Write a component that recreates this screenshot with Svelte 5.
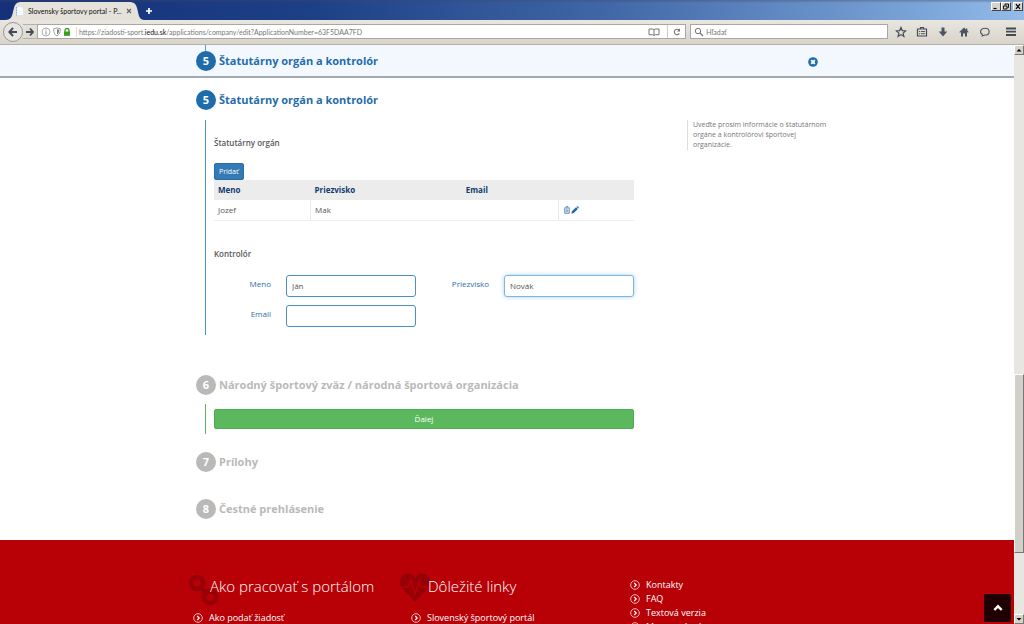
<script>
  let meno = $state('Ján');
  let priezvisko = $state('Novák');
  let email = $state('');
  const people = [{ meno: 'Jozef', priezvisko: 'Mak', email: '' }];
  const contactLinks = ['Kontakty', 'FAQ', 'Textová verzia', 'Mapa stránok'];
</script>

{#snippet bullet()}
  <svg class="bullet" viewBox="0 0 10 10" aria-hidden="true">
    <circle cx="5" cy="5" r="4.3" fill="none" stroke="#ffc9c9" stroke-width=".9" />
    <path d="M4.2 3 6.2 5 4.2 7" fill="none" stroke="#fff" stroke-width="1.2" />
  </svg>
{/snippet}

{#snippet heading(n, text)}
  <h2><span class="num">{n}</span>{text}</h2>
{/snippet}

<div class="window">
  <header class="titlebar">
    <div class="tab">
      <svg class="tab-shape" viewBox="0 0 140 18" preserveAspectRatio="none" aria-hidden="true">
        <path d="M0 18C8 18 7 12 9 6 10 2 12 0 16 0H124C129 0 131 2 132 6 134 12 133 18 140 18Z" fill="#e5e2dc" />
      </svg>
      <svg class="page-icon" viewBox="0 0 8 10" aria-hidden="true">
        <path d="M.5.5H5L7.5 3V9.5H.5Z" fill="#f6faff" stroke="#d5e0ea" stroke-width=".6" /><path d="M.5 1V9.5" stroke="#79a9d8" stroke-dasharray="1.5 1" />
      </svg>
      <span class="tab-title">Slovensky športovy portal - P...</span>
      <button class="plain" aria-label="Zavrieť kartu"><svg width="6" height="6" viewBox="0 0 6 6"><path d="M1 1 5 5M5 1 1 5" stroke="#666" stroke-width="1.3" /></svg></button>
    </div>
    <button class="plain new-tab" aria-label="Nová karta"><svg width="8" height="8" viewBox="0 0 8 8"><path d="M4 1V7M1 4H7" stroke="#fff" stroke-width="1.7" /></svg></button>
    <div class="win-buttons">
      <button aria-label="Minimalizovať"><svg viewBox="0 0 8 7"><path d="M1.5 5.5H4.5" stroke="#000" stroke-width="1.2" /></svg></button>
      <button aria-label="Obnoviť"><svg viewBox="0 0 8 7"><path d="M3 2.5V1H6.5V4.5H5.5M1.5 3H5V6H1.5Z" fill="none" stroke="#000" stroke-width=".9" /></svg></button>
      <button class="close" aria-label="Zavrieť"><svg viewBox="0 0 8 7"><path d="M2 1.2 6 5.8M6 1.2 2 5.8" stroke="#000" stroke-width="1.2" /></svg></button>
    </div>
  </header>

  <nav class="toolbar">
    <button class="plain back" aria-label="Späť"><svg width="10" height="10" viewBox="0 0 10 10"><path d="M5 1 1.3 5 5 9M1.5 5H9" fill="none" stroke="#414c59" stroke-width="2" /></svg></button>
    <button class="plain forward" aria-label="Dopredu"><svg width="8" height="10" viewBox="0 0 8 10"><path d="M4 1.5 7 5 4 8.5M7 5H0" fill="none" stroke="#414c59" stroke-width="1.9" /></svg></button>
    <div class="address">
      <svg width="10" height="10" viewBox="0 0 10 10" aria-hidden="true"><circle cx="5" cy="5" r="4" fill="none" stroke="#999" stroke-width=".8" /><path d="M5 2.4V3.5M5 4.3V7.6" stroke="#888" /></svg>
      <svg width="8" height="10" viewBox="0 0 8 10" aria-hidden="true"><path d="M4 1 7.3 1.7C7.4 5.5 6.5 7.7 4 9 1.5 7.7.6 5.5.7 1.7Z" fill="#fff" stroke="#888" stroke-width=".8" /><path d="M4 2.3V7.6C5.5 6.5 6 5 6.1 2.7Z" fill="#777" /></svg>
      <svg width="8" height="10" viewBox="0 0 8 10" aria-hidden="true"><path d="M2 5V3.5C2 .8 6 .8 6 3.5V5" fill="none" stroke="#3d9b22" stroke-width="1.3" /><rect x="1" y="4.5" width="6" height="4.3" fill="#3d9b22" /></svg>
      <span class="url">https://ziadosti-sport.<b>iedu.sk</b>/applications/company/edit?ApplicationNumber=63F5DAA7FD</span>
      <button class="plain reader" aria-label="Režim čítania"><svg width="12" height="10" viewBox="0 0 12 10"><path d="M1 2H4.7L6 2.7 7.3 2H11V7.7H7.3L6 8.5 4.7 7.7H1ZM6 3V8" fill="none" stroke="#777" /></svg></button>
      <button class="plain reload" aria-label="Obnoviť stránku"><svg width="10" height="10" viewBox="0 0 10 10"><path d="M7.3 6.4A2.7 2.7 0 1 1 7 3.2" fill="none" stroke="#777" stroke-width="1.1" /><path d="M8 1.3V4.5H4.9Z" fill="#777" /></svg></button>
    </div>
    <label class="search">
      <svg width="10" height="10" viewBox="0 0 10 10" aria-hidden="true"><circle cx="4" cy="4" r="2.7" fill="none" stroke="#777" /><path d="M6 6 9 9" stroke="#777" stroke-width="1.3" /></svg>
      <input type="search" placeholder="Hľadať" aria-label="Hľadať" />
    </label>
    <div class="tools">
      <button class="plain" aria-label="Záložka"><svg viewBox="0 0 12 12"><path d="M6 1.5 7.3 4.6 10.7 4.9 8.1 7.1 8.9 10.4 6 8.6 3.1 10.4 3.9 7.1 1.3 4.9 4.7 4.6Z" fill="none" stroke="#414c59" stroke-width="1.2" /></svg></button>
      <button class="plain" aria-label="Zoznam záložiek"><svg viewBox="0 0 12 12"><path d="M1.5 3H10.500V10H1.500ZM4.500 3V1.500H7.500V3" fill="none" stroke="#414c59" stroke-width="1.200" /><path d="M3 5.500H4.200M5 5.500H9M3 7.700H4.200M5 7.700H9" stroke="#414c59" stroke-width=".9" /></svg></button>
      <button class="plain" aria-label="Stiahnuté"><svg viewBox="0 0 12 12"><path d="M4.5 1.5H7.5V5.5H10.3L6 10.5 1.7 5.5H4.5Z" fill="#4c5663" /></svg></button>
      <button class="plain" aria-label="Domov"><svg viewBox="0 0 12 12"><path d="M6 1.5 1.3 6 2 6.7 3 6V10.5H5V7.5H7V10.5H9V6L10 6.7 10.7 6 9.3 4.6V2.5H8V3.4Z" fill="#4c5663" /></svg></button>
      <button class="plain" aria-label="Chat"><svg viewBox="0 0 12 12"><path d="M3.500 8.600C0 6.500 1.500 2.300 6 2.300 11.500 2.300 11.500 9 6 9L3.200 10Z" fill="none" stroke="#4c5663" stroke-width="1.100" /></svg></button>
      <button class="plain menu" aria-label="Ponuka"><svg viewBox="0 0 12 12"><path d="M1 2.5H11M1 5.7H11M1 9H11" stroke="#414c59" stroke-width="1.8" /></svg></button>
    </div>
  </nav>

  <div class="viewport">
    <div class="page">
      <div class="sticky">
        <div class="container sticky-row">
          {@render heading(5, 'Štatutárny orgán a kontrolór')}
          <button class="plain dismiss" aria-label="Zavrieť"><svg width="10" height="10" viewBox="0 0 10 10"><circle cx="5" cy="5" r="4.800" fill="#1f6cab" /><path d="M3.200 3.200 6.800 6.800M6.800 3.200 3.200 6.800" stroke="#fff" stroke-width="1.900" /></svg></button>
        </div>
      </div>

      <main class="container">
        <div class="columns">
          <section class="active">
            {@render heading(5, 'Štatutárny orgán a kontrolór')}
            <div class="body">
              <h3>Štatutárny orgán</h3>
              <button class="add">Pridať</button>
              <table>
                <colgroup><col class="c1" /><col class="c2" /><col class="c3" /><col class="c4" /></colgroup>
                <thead><tr><th>Meno</th><th>Priezvisko</th><th>Email</th><th></th></tr></thead>
                <tbody>
                  {#each people as p}
                    <tr>
                      <td>{p.meno}</td><td class="split">{p.priezvisko}</td><td>{p.email}</td>
                      <td class="split">
                        <div class="actions">
                          <button class="plain" aria-label="Odstrániť"><svg width="8" height="8" viewBox="0 0 8 8"><path d="M1 2H7M3 1.5V.7H5V1.5M1.7 2.5V7.3H6.3V2.5M3.2 3.3V6.3M4.8 3.3V6.3" fill="none" stroke="#3c76ab" stroke-width=".8" /></svg></button>
                          <button class="plain" aria-label="Upraviť"><svg width="8" height="8" viewBox="0 0 8 8"><path d="M.3 7.7 1 5.3 5 1.3 6.8 3.1 2.8 7ZM5.5.8 6 .3C6.7-.2 8.2 1.3 7.7 2L7.2 2.6Z" fill="#1f67a8" /></svg></button>
                        </div>
                      </td>
                    </tr>
                  {/each}
                </tbody>
              </table>
              <h3 class="second">Kontrolór</h3>
              <form class="fields">
                <label for="meno">Meno</label><input id="meno" bind:value={meno} />
                <label for="priezvisko">Priezvisko</label><input id="priezvisko" class="focused" bind:value={priezvisko} />
                <label for="email">Email</label><input id="email" bind:value={email} />
              </form>
            </div>
          </section>
          <aside>Uveďte prosím informácie o štatutárnom orgáne a kontrolórovi športovej organizácie.</aside>
        </div>

        <section class="muted six">
          {@render heading(6, 'Národný športový zväz / národná športová organizácia')}
          <div class="next-wrap"><button class="next">Ďalej</button></div>
        </section>
        <section class="muted seven">{@render heading(7, 'Prílohy')}</section>
        <section class="muted eight">{@render heading(8, 'Čestné prehlásenie')}</section>
      </main>

      <footer>
        <div class="container footer-grid">
          <div class="group">
            <svg class="deco" viewBox="0 0 32 32" aria-hidden="true"><g fill="none" stroke="#960006" stroke-width="4.500"><circle cx="9" cy="9" r="6" /><circle cx="22" cy="23" r="6" /><path d="M11 12 20 21" stroke-width="4" /></g></svg>
            <h4>Ako pracovať s portálom</h4>
            <a href="#podat">{@render bullet()}Ako podať žiadosť</a>
          </div>
          <div class="group">
            <svg class="deco heart" viewBox="0 0 32 32" aria-hidden="true"><path d="M16 30 3 16C-1 11 1 2 8 1.500 12 1.300 14.500 3.500 16 6 17.500 3.500 20 1.300 24 1.500 31 2 33 11 29 16Z" fill="#960006" /><path d="M1 15H9L12 8 16 22 20 11 22 15H31" fill="none" stroke="#b80007" stroke-width="1.500" /></svg>
            <h4>Dôležité linky</h4>
            <a href="#portal">{@render bullet()}Slovenský športový portál</a>
          </div>
          <div class="contacts">
            {#each contactLinks as link}<a href="#odkaz">{@render bullet()}{link}</a>{/each}
          </div>
        </div>
      </footer>
      <button class="to-top" aria-label="Hore"><svg width="10" height="8" viewBox="0 0 10 8"><path d="M1.3 6 5 2.3 8.7 6" fill="none" stroke="#fff" stroke-width="2.4" /></svg></button>
    </div>
    <div class="scrollbar">
      <button aria-label="Posunúť nahor"><svg viewBox="0 0 8 8"><path d="M1.5 5.5 4 3 6.5 5.5Z" /></svg></button>
      <div class="track"><div class="thumb"></div></div>
      <button aria-label="Posunúť nadol"><svg viewBox="0 0 8 8"><path d="M1.5 3 4 5.5 6.5 3Z" /></svg></button>
    </div>
  </div>
</div>

<style>
  :global(body) { background: #fff; font-family: "Open Sans", sans-serif; }
  * { box-sizing: border-box; }
  h2, h3, h4 { margin: 0; }
  button, input { font-family: inherit; }
  svg { display: block; flex: none; }
  .plain { display: flex; align-items: center; justify-content: center; padding: 0; border: 0; background: none; }
  .window { display: flex; flex-direction: column; height: 100vh; overflow: hidden; }

  .titlebar { display: flex; align-items: flex-end; height: 20px; padding-left: 5px; background: linear-gradient(#3a4a6066, #3a4a6000 3px), linear-gradient(90deg, #16307a, #1d3f85 30%, #4268a8 60%, #7ba4d8 90%, #94bbe9); flex: none; }
  .tab { position: relative; display: flex; align-items: center; gap: 4px; width: 140px; height: 18px; padding: 0 14px 0 11px; }
  .tab > * { position: relative; }
  .tab .tab-shape { position: absolute; inset: 0; width: 100%; height: 100%; }
  .page-icon { width: 8px; height: 10px; }
  .tab-title { flex: 1; font: 7px Lato, sans-serif; color: #111; white-space: nowrap; }
  .new-tab { height: 18px; }
  .win-buttons { display: flex; align-self: flex-start; margin: 2px 1px 0 auto; }
  .win-buttons button { width: 10px; height: 9px; padding: 0; border: 1px solid; border-color: #fff #444 #444 #fff; background: #d8d4cb; }
  .win-buttons .close { margin-left: 2px; }

  .toolbar { display: flex; align-items: center; height: 25px; padding: 0 7px 1px 3px; background: linear-gradient(#e9e6e0, #d8d4ca); border-bottom: 1px solid #b5b1a6; flex: none; }
  .back { width: 20px; height: 20px; border: 1px solid #999; border-radius: 50%; background: #e8e5e0; }
  .forward { width: 14px; height: 15px; border: solid #b5b2ab; border-width: 1px 0; }
  .address, .search { display: flex; align-items: center; height: 15px; border: 1px solid #aaa7a0; background: #fff; }
  .address { flex: 331; gap: 2px; padding-left: 3px; min-width: 0; }
  .url { flex: 1; overflow: hidden; margin-left: 3px; padding-left: 2px; border-left: 1px solid #ddd; font: 7px/10px Lato, sans-serif; color: #777; white-space: nowrap; }
  .url b { font-weight: 400; color: #111; }
  .reader { width: 14px; margin-right: 4px; }
  .reload { width: 18px; height: 13px; border-left: 1px solid #ccc; }
  .search { flex: 99; gap: 2px; margin-left: 4px; padding-left: 3px; min-width: 0; }
  .search input { width: 100%; min-width: 0; padding: 0; border: 0; outline: 0; background: none; font: 7px Lato, sans-serif; }
  .search input::placeholder { color: #777; }
  .tools { display: flex; gap: 9px; margin-left: 7px; }
  .tools svg { width: 12px; height: 12px; }
  .menu { margin-left: 5px; }

  .viewport { display: flex; flex: 1; min-height: 0; }
  .page { position: relative; display: flex; flex-direction: column; flex: 1; min-width: 0; overflow: hidden; }
  .container { width: 100%; max-width: 650px; margin: 0 auto; padding: 0 0 0 14px; }
  .sticky { height: 33px; flex: none; background: #f3f8fe; border-bottom: 2px solid #a2a9b1; }
  .sticky-row { display: flex; justify-content: space-between; align-items: center; height: 31px; background: linear-gradient(#5d9bce, #5d9bce) 23px 0 / 1px 6px no-repeat; }
  .dismiss { margin: 2px 14px 0 0; }
  h2 { display: flex; align-items: center; gap: 3px; height: 20px; font-size: 11px; line-height: 20px; font-weight: 700; color: #1f6cab; white-space: nowrap; }
  .num { width: 20px; height: 20px; border-radius: 50%; background: #1f6cab; color: #fff; text-align: center; }
  main { flex: none; }
  .columns { display: flex; justify-content: space-between; padding-top: 12px; }
  section { width: 438px; }
  .body { margin: 10px 0 0 9px; padding: 16px 0 8px 8px; border-left: 1px solid #4a94d0; }
  h3 { font-size: 8px; line-height: 14px; font-weight: 600; color: #555; }
  .add { display: block; height: 17px; margin-top: 13px; padding: 0 4px; border: 1px solid #2e6da4; border-radius: 2px; background: #337ab7; color: #fff; font-size: 7px; line-height: 15px; }
  table { width: 100%; border-collapse: collapse; table-layout: fixed; font-size: 8px; line-height: 12px; color: #555; }
  .c1 { width: 23%; } .c2 { width: 36%; } .c3 { width: 23%; } .c4 { width: 18%; }
  th, td { height: 20px; padding: 0 4px; text-align: left; }
  th { background: #ececec; color: #0f3c6e; font-weight: 700; }
  td { border-bottom: 1px solid #eee; }
  .split { border-left: 1px solid #e8e8e8; }
  .actions { display: flex; }
  .second { margin-top: 26px; }
  .fields { display: grid; grid-template-columns: 57px 1fr 58px 1fr; column-gap: 15px; row-gap: 8px; margin-top: 14px; }
  .fields label { padding-top: 2px; font-size: 8px; line-height: 14px; text-align: right; color: #2a70ae; }
  .fields input { width: 100%; min-width: 0; height: 22px; padding: 0 5px; border: 1px solid #4b8fc7; border-radius: 3px; outline: 0; background: #fff; color: #555; font-size: 8px; }
  .fields .focused { border-color: #7fb5e2; box-shadow: 0 0 4px #66afe999; }
  aside { align-self: flex-start; width: 145px; margin-top: 30px; padding-left: 5px; border-left: 1px solid #ddd; font-size: 7px; line-height: 10px; color: #777; }
  .muted h2 { color: #b9b9b9; }
  .muted .num { background: #b9b9b9; }
  .six { margin-top: 40px; }
  .next-wrap { margin: 9px 0 0 9px; padding: 5px 0 5px 8px; border-left: 1px solid #5cb85c; }
  .next { display: block; width: 100%; height: 20px; border: 1px solid #4cae4c; border-radius: 2px; background: #5cb85c; color: #fff; font-size: 8px; }
  .seven { margin-top: 18px; }
  .eight { margin-top: 27px; padding-bottom: 21px; }

  footer { flex: 1 0 84px; overflow: hidden; background: #b80007; color: #fff; }
  .footer-grid { display: grid; grid-template-columns: 218px 219px 1fr; }
  .group { position: relative; padding-top: 35px; }
  .deco { position: absolute; left: -8px; top: 34px; width: 32px; height: 32px; }
  .heart { left: -15px; top: 32px; }
  h4 { position: relative; padding-left: 14px; font-size: 15px; line-height: 22px; font-weight: 300; white-space: nowrap; }
  footer a { display: flex; align-items: center; gap: 6px; margin-left: -3px; font-size: 9px; line-height: 14px; color: #fff; text-decoration: none; }
  .group a { margin-top: 14px; }
  .contacts { padding-top: 38px; }
  .bullet { width: 10px; height: 10px; }
  .to-top { position: absolute; right: 3px; bottom: 2px; display: flex; align-items: center; justify-content: center; width: 27px; height: 28px; padding: 0; border: 0; background: #210003; }

  .scrollbar { display: flex; flex-direction: column; width: 10px; background: #e8e6e1; flex: none; }
  .scrollbar button { height: 10px; padding: 0; border: 1px solid; border-color: #fff #777 #777 #fff; background: #d6d2ca; }
  .track { display: flex; flex-direction: column; flex: 1; }
  .track::before { content: ""; flex: 321; }
  .track::after { content: ""; flex: 61; }
  .thumb { flex: 178; border: 1px solid; border-color: #fff #777 #777 #fff; background: #d2cfc8; }
</style>
